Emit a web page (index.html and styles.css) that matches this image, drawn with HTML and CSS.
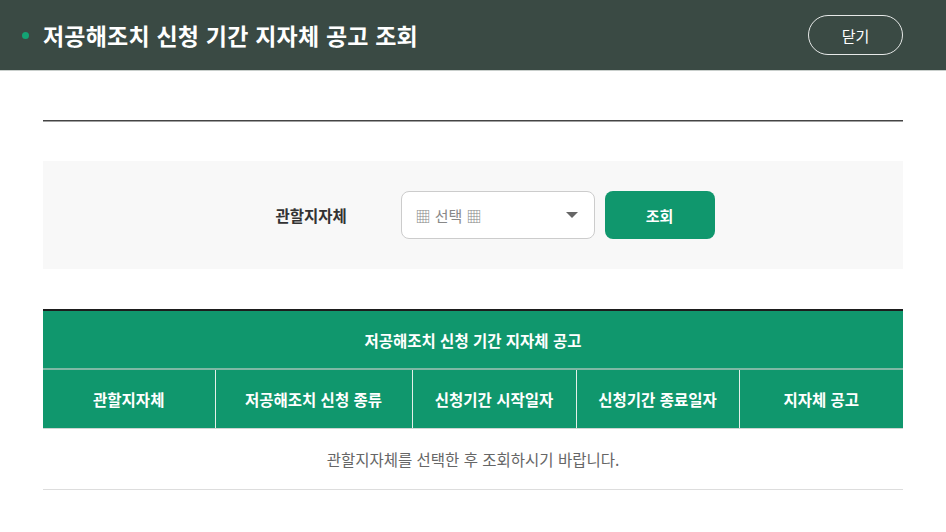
FILE: index.html
```html
<!DOCTYPE html>
<html lang="ko">

<head>
    <meta charset="UTF-8">
    <meta name="viewport" content="width=device-width, initial-scale=1.0">
    <title>저공해조치 신청 기간 지자체 공고 조회</title>
    <link rel="stylesheet" href="styles.css">
</head>

<body>
    <header class="pop-header">
        <h1 class="pop-title">저공해조치 신청 기간 지자체 공고 조회</h1>
        <button type="button" class="btn-close">닫기</button>
    </header>

    <div class="pop-body">
        <hr class="top-line">

        <div class="search-box">
            <label for="area" class="search-label">관할지자체</label>
            <div class="select-wrap">
                <select id="area" name="area">
                    <option value="">▦ 선택 ▦</option>
                </select>
            </div>
            <button type="button" class="btn-search">조회</button>
        </div>

        <table class="list-table">
            <colgroup>
                <col style="width: 172px">
                <col style="width: 197px">
                <col style="width: 164px">
                <col style="width: 163px">
                <col>
            </colgroup>
            <thead>
                <tr>
                    <th colspan="5" class="caption-row">저공해조치 신청 기간 지자체 공고</th>
                </tr>
                <tr>
                    <th>관할지자체</th>
                    <th>저공해조치 신청 종류</th>
                    <th>신청기간 시작일자</th>
                    <th>신청기간 종료일자</th>
                    <th>지자체 공고</th>
                </tr>
            </thead>
            <tbody>
                <tr>
                    <td colspan="5" class="empty">관할지자체를 선택한 후 조회하시기 바랍니다.</td>
                </tr>
            </tbody>
        </table>
    </div>
</body>

</html>
```

FILE: styles.css
```css
* {
    margin: 0;
    padding: 0;
    box-sizing: border-box;
    font-family: "Noto Sans CJK KR", "Noto Sans", sans-serif;
}

html,
body {
    width: 100%;
    background-color: #fff;
    color: #222;
}

.pop-header {
    display: flex;
    align-items: center;
    justify-content: space-between;
    height: 71px;
    padding: 0 43px 0 22px;
    background-color: #3a4a44;
    border-bottom: 1px solid #c9cfcc;
}

.pop-title {
    display: flex;
    align-items: center;
    gap: 14px;
    color: #fff;
    font-size: 23px;
    font-weight: 700;
    letter-spacing: 0.2px;
}

.pop-title::before {
    content: "";
    width: 7px;
    height: 7px;
    border-radius: 50%;
    background-color: #13a374;
}

.btn-close {
    width: 95px;
    height: 40px;
    border: 1px solid #e6e9e8;
    border-radius: 20px;
    background: transparent;
    color: #fff;
    font-size: 15px;
    cursor: pointer;
}

.pop-body {
    padding: 49px 43px 0;
}

.top-line {
    border: none;
    height: 2px;
    background: linear-gradient(#444 50%, #a0a0a0 50%);
}

.search-box {
    display: flex;
    align-items: center;
    justify-content: center;
    height: 108px;
    margin-top: 39px;
    background-color: #f8f8f8;
}

.search-label {
    width: 125px;
    margin-left: 44px;
    font-size: 15.5px;
    font-weight: 700;
    color: #333;
}

.select-wrap {
    position: relative;
    width: 194px;
    height: 48px;
}

.select-wrap::after {
    content: "";
    position: absolute;
    right: 17px;
    top: 21px;
    border-left: 6px solid transparent;
    border-right: 6px solid transparent;
    border-top: 6px solid #666;
    pointer-events: none;
}

.select-wrap select {
    width: 100%;
    height: 100%;
    padding: 0 14px;
    border: 1px solid #ccc;
    border-radius: 8px;
    background-color: #fff;
    color: #888;
    font-size: 15px;
    appearance: none;
    outline: none;
}

.btn-search {
    width: 110px;
    height: 48px;
    margin-left: 10px;
    border: none;
    border-radius: 8px;
    background-color: #10976d;
    color: #fff;
    font-size: 15px;
    font-weight: 700;
    cursor: pointer;
}

.list-table {
    width: 100%;
    margin-top: 40px;
    border-collapse: collapse;
    table-layout: fixed;
    border-top: 2px solid #1d1d1d;
}

.list-table th {
    height: 59px;
    background-color: #10976d;
    color: #fff;
    font-size: 15.5px;
    font-weight: 700;
    border-left: 1px solid #e4efe9;
    border-bottom: 1px solid #cfd6d3;
}

.list-table th:first-child {
    border-left: none;
}

.list-table th.caption-row {
    height: 59px;
    border-bottom: 2px solid #7fb8a4;
}

.list-table td.empty {
    height: 61px;
    text-align: center;
    color: #666;
    font-size: 15.5px;
    border-bottom: 1px solid #ddd;
}
```
